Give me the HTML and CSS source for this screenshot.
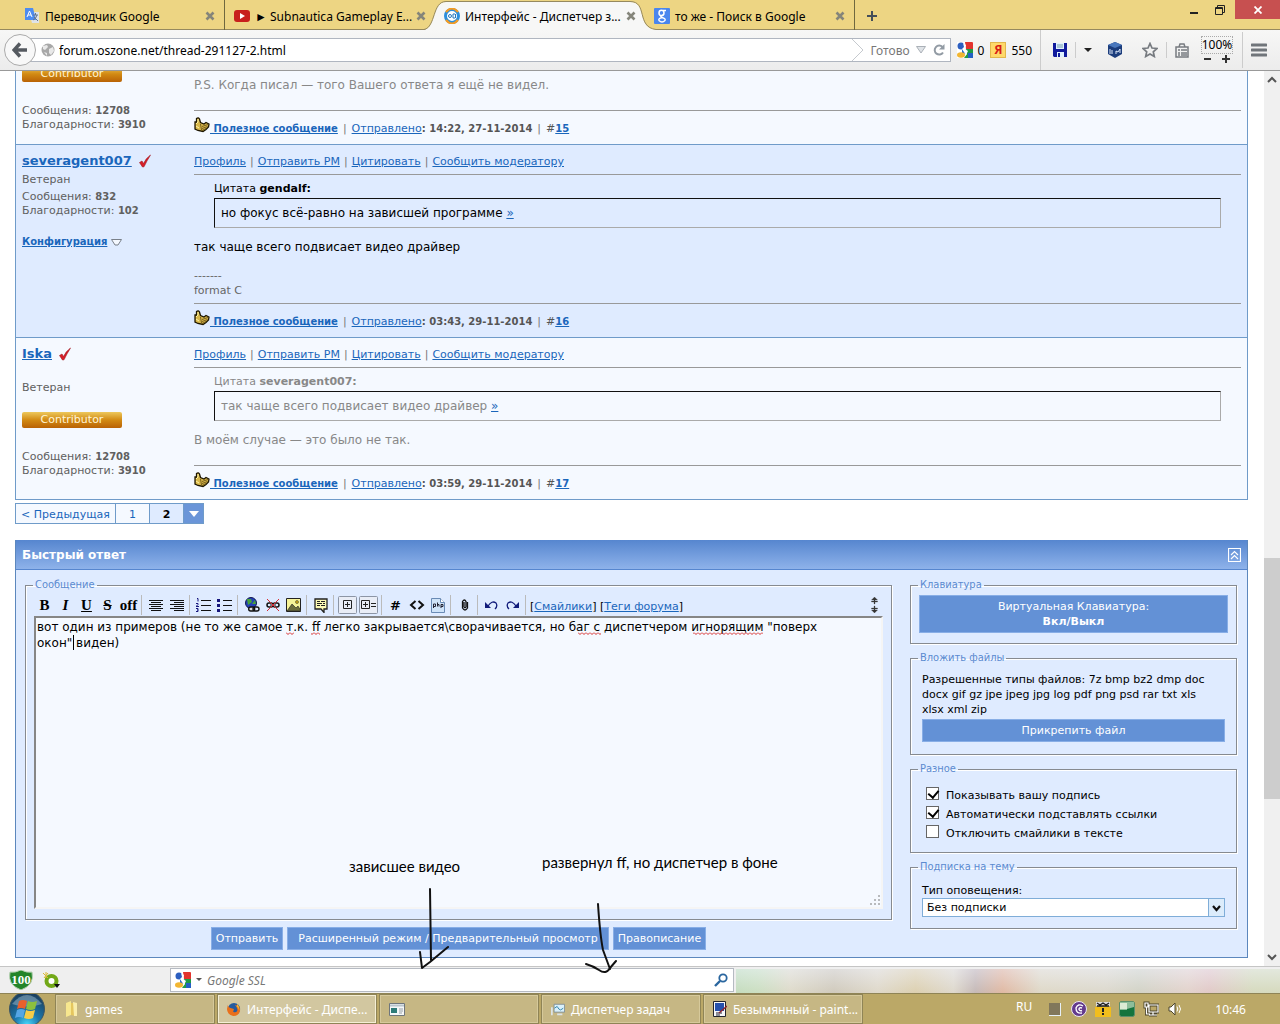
FILE: index.html
```
<!DOCTYPE html>
<html lang="ru">
<head>
    <meta charset="UTF-8">
    <title>Интерфейс - Диспетчер задач</title>
    <meta name="viewport" content="width=device-width, initial-scale=1">
    <link rel="stylesheet" href="styles.css">
</head>
<body>
    <!-- shared icons -->
    <svg class="defs" aria-hidden="true">
        <symbol id="close" viewBox="0 0 10 10"><path d="M1.5 1.5l7 7M8.500 1.500l-7 7" stroke="#85857a" stroke-width="2.600"/></symbol>
        <symbol id="check" viewBox="0 0 14 14"><path d="M1.500 8.500L4 7l1.500 2.500Q8 4 12.500 1Q9 6.500 6 12.800L4.500 13Z" fill="#d81e28" stroke="#a01820" stroke-width=".6"/></symbol>
        <symbol id="thumb" viewBox="0 0 16 16">
            <path d="M1 5L2.500 5V1.500Q4.500 0 5.500 2L6.500 5.500L10 7L12 5.500L15 7L14.500 10L12 12.500L9 14.500L4 13.500L1 12Z" fill="#d9b84a" stroke="#1c1500" stroke-width="1.300"/>
            <path d="M2 7L4 5V2M2 9l3 2" stroke="#fff3a5" fill="none"/>
            <path d="M8 9.500l6-2M8 11.500l5.500-2M8 13.500l4-2M6.500 7l1 6" stroke="#5e4710" stroke-width=".8" fill="none"/>
        </symbol>
        <symbol id="google" viewBox="0 0 16 16">
            <path d="M0 0h16v16H0z" fill="#fff"/>
            <path d="M8 0h7a1 1 0 0 1 1 1v6H9z" fill="#e2332d"/>
            <path d="M9 7h7v9H7l3-4z" fill="#1f9b45"/>
            <path d="M11 11h5v5h-5z" fill="#2561c4"/>
            <circle cx="4" cy="4" r="3.500" fill="#2c5fc0"/>
            <path d="M5 7l5 1-1 4-4-1z" fill="#2f6fc9"/>
            <ellipse cx="4" cy="13" rx="4" ry="2.700" fill="#f2b632"/>
            <path d="M6 1l3 2-1 4 3 2-2 4-2-3-2-3 2-2z" fill="#fff"/>
        </symbol>
    </svg>

    <header class="tabs">
        <div class="tab">
            <svg width="16" height="16" viewBox="0 0 16 16"><path d="M5 4h10v11H8z" fill="#dfe3e8"/><path d="M1 0h8l3 12H1z" fill="#4e8cf0"/><path d="M3 9l2.500-6L8 9M4 7h3" stroke="#fff" fill="none"/><path d="M9 7h5M11.500 5v2M13 7q-1 4-4 5M10 9l4 4" stroke="#66768c" fill="none"/></svg>
            <span>Переводчик Google</span>
            <button aria-label="Закрыть"><svg width="10" height="10"><use href="#close"/></svg></button>
        </div>
        <div class="tab">
            <svg width="16" height="16" viewBox="0 0 16 16"><rect y="2" width="16" height="12" rx="3" fill="#c8201c"/><path d="M6 5l5 3-5 3z" fill="#fff"/></svg>
            <span>► Subnautica Gameplay E...</span>
            <button aria-label="Закрыть"><svg width="10" height="10"><use href="#close"/></svg></button>
        </div>
        <div class="tab active">
            <svg class="tab-shape" width="232" height="30" viewBox="0 0 232 30"><path d="M0 30C12 28 8 2 22 2H206C224 2 212 28 232 29.500V30Z" fill="#f7f7f6"/><path d="M0 29.500C12 27 8 1.500 22 1.500H206C224 1.500 212 27 232 29.500" fill="none" stroke="#96895e"/></svg>
            <svg width="16" height="16" viewBox="0 0 16 16"><circle cx="8" cy="8" r="6.500" fill="#fff" stroke="#2d8fdc" stroke-width="3"/><path d="M2 4Q8-3 14 4M2 12Q8 19 14 12" fill="none" stroke="#f49b22" stroke-width="2"/><circle cx="6" cy="8" r="1.500" fill="none" stroke="#2779bd"/><path d="M9 6v4h2l1-1-1-1 1-1-1-1z" fill="none" stroke="#2779bd"/></svg>
            <span>Интерфейс - Диспетчер з...</span>
            <button aria-label="Закрыть"><svg width="10" height="10"><use href="#close"/></svg></button>
        </div>
        <div class="tab">
            <svg width="16" height="16" viewBox="0 0 16 16"><rect width="16" height="16" rx="1" fill="#4a86ee"/><ellipse cx="7.500" cy="5" rx="2.500" ry="2.700" fill="none" stroke="#fff" stroke-width="1.500"/><path d="M9 2.500h3M9 7q-4 1-1 2.500q4 1 3 3q-3 3-6 0q-1-2 3-3" fill="none" stroke="#fff" stroke-width="1.400"/></svg>
            <span>то же - Поиск в Google</span>
            <button aria-label="Закрыть"><svg width="10" height="10"><use href="#close"/></svg></button>
        </div>
        <button class="new-tab" aria-label="Новая вкладка"><svg width="10" height="10"><path d="M5 0v10M0 5h10" stroke="#454f59" stroke-width="2"/></svg></button>
        <div class="win-buttons">
            <button aria-label="Свернуть"><svg width="10" height="10"><path d="M1 8h8" stroke="#222" stroke-width="2"/></svg></button>
            <button aria-label="Восстановить"><svg width="10" height="10"><path d="M.5 2.500h7v7h-7zM2.500 2V.5h7v7H8M1 3.500h6" fill="none" stroke="#222"/></svg></button>
            <button class="win-close" aria-label="Закрыть окно"><svg width="8" height="8"><path d="M.5 .5l7 7M7.500 .5l-7 7" stroke="#fff" stroke-width="1.800"/></svg></button>
        </div>
    </header>

    <nav class="navbar">
        <button class="back" aria-label="Назад"><svg width="16" height="16"><path d="M8 1.500L2 8l6 6.500M2 8h13" fill="none" stroke="#555a60" stroke-width="3.400"/></svg></button>
        <div class="urlbar">
            <svg width="14" height="14" viewBox="0 0 14 14"><circle cx="7" cy="7" r="6.500" fill="#a8a8a8"/><path d="M2 3l4-1 1 2-3 3-2-1zM8 6l4-2 1 4-3 4-2-2zM3 9l3 1v3z" fill="#e9e9e9"/></svg>
            <input type="text" aria-label="Адрес" value="forum.oszone.net/thread-291127-2.html">
            <svg width="12" height="22"><path d="M0 0l11 11L0 22" fill="none" stroke="#c5c9ce"/></svg>
            <span class="state">Готово</span>
            <svg width="10" height="8"><path d="M.5 .5h9L5 7z" fill="#dfe3e7" stroke="#aab0b7"/></svg>
            <svg class="reload" width="12" height="12"><path d="M10 8.500A4.500 4.500 0 1 1 9.500 3" fill="none" stroke="#929ba4" stroke-width="2"/><path d="M11.500 0v5.500H6z" fill="#929ba4"/></svg>
        </div>
        <div class="counter"><svg width="16" height="16"><use href="#google"/></svg>0</div>
        <div class="counter"><span class="yandex">Я</span>550</div>
        <div class="nav-icons">
            <svg width="14" height="14"><path d="M0 0h14v14H1L0 13z" fill="#101a9c"/><path d="M3 0h8v6H3zM4 9h7v5H4z" fill="#dff2ff"/><path d="M4 2h6M4 4h6" stroke="#79a"/><path d="M5 10h2v4H5z" fill="#101a9c"/></svg>
            <i class="divider"></i>
            <svg width="8" height="4"><path d="M0 0h8L4 4z" fill="#222"/></svg>
            <svg class="cube" width="16" height="16"><path d="M8 0l7 3v9l-7 4-7-4V3z" fill="#1c3d7c"/><path d="M8 0l7 3-7 3-7-3z" fill="#4a78bd"/><path d="M3 7v5M5 8v4M9 12V9l2 1 2-3v4" stroke="#dde9fa" fill="none"/></svg>
            <svg class="star" width="16" height="16"><path d="M8 1.500l2 4.500 5 .5-3.700 3.300 1 4.700L8 12l-4.300 2.500 1-4.700L1 6.500 6 6z" fill="none" stroke="#777b80" stroke-width="1.700"/></svg>
            <i class="divider"></i>
            <svg width="14" height="15"><path d="M1 4h12v10H1zM4 4l1-3h4l1 3M3 7h2M6 7h6M3 10h2M6 10h6M3 12h2M6 12h6" fill="none" stroke="#777b80" stroke-width="1.500"/></svg>
            <div class="zoom"><span>100%</span><svg width="28" height="10"><path d="M1 5h7M19 5h8M23 1v8" stroke="#333" stroke-width="2"/></svg></div>
            <i class="divider tall"></i>
            <svg width="16" height="14"><path d="M1 2h14M1 7h14M1 12h14" stroke="#70757a" stroke-width="3" stroke-linecap="round"/></svg>
        </div>
    </nav>

    <div class="viewport">
        <main class="page">
            <article class="post pale">
                <div class="author bottom">
                    <div class="badge">Contributor</div>
                    <div class="stats">Сообщения: <b>12708</b><br>Благодарности: <b>3910</b></div>
                </div>
                <div class="message bottom">
                    <p class="text grey">P.S. Когда писал — того Вашего ответа я ещё не видел.</p>
                    <div class="foot"><svg width="16" height="16"><use href="#thumb"/></svg><a href="#" class="useful">&nbsp;Полезное сообщение</a><i>|</i><a href="#">Отправлено</a><b>: 14:22, 27-11-2014</b><i>|</i><span>#<a href="#"><b>15</b></a></span></div>
                </div>
            </article>

            <article class="post">
                <div class="author">
                    <div class="name"><a href="#">severagent007</a><svg width="14" height="14"><use href="#check"/></svg></div>
                    <div class="rank">Ветеран</div>
                    <div class="stats">Сообщения: <b>832</b><br>Благодарности: <b>102</b></div>
                    <div class="config"><a href="#">Конфигурация</a><svg width="11" height="8"><path d="M.5 1.500h10L7 7H4z" fill="#f4f8ff" stroke="#79808a"/></svg></div>
                </div>
                <div class="message">
                    <div class="links"><a href="#">Профиль</a><i>|</i><a href="#">Отправить PM</a><i>|</i><a href="#">Цитировать</a><i>|</i><a href="#">Сообщить модератору</a></div>
                    <div class="cite">Цитата <b>gendalf:</b></div>
                    <blockquote>но фокус всё-равно на зависшей программе <a href="#">»</a></blockquote>
                    <p class="text">так чаще всего подвисает видео драйвер</p>
                    <div class="sig">-------<br>format C</div>
                    <div class="foot"><svg width="16" height="16"><use href="#thumb"/></svg><a href="#" class="useful">&nbsp;Полезное сообщение</a><i>|</i><a href="#">Отправлено</a><b>: 03:43, 29-11-2014</b><i>|</i><span>#<a href="#"><b>16</b></a></span></div>
                </div>
            </article>

            <article class="post pale">
                <div class="author spaced">
                    <div class="name"><a href="#">Iska</a><svg width="14" height="14"><use href="#check"/></svg></div>
                    <div class="rank">Ветеран</div>
                    <div class="badge">Contributor</div>
                    <div class="stats">Сообщения: <b>12708</b><br>Благодарности: <b>3910</b></div>
                </div>
                <div class="message">
                    <div class="links"><a href="#">Профиль</a><i>|</i><a href="#">Отправить PM</a><i>|</i><a href="#">Цитировать</a><i>|</i><a href="#">Сообщить модератору</a></div>
                    <div class="cite grey">Цитата <b>severagent007:</b></div>
                    <blockquote class="grey">так чаще всего подвисает видео драйвер <a href="#">»</a></blockquote>
                    <p class="text grey">В моём случае — это было не так.</p>
                    <div class="foot"><svg width="16" height="16"><use href="#thumb"/></svg><a href="#" class="useful">&nbsp;Полезное сообщение</a><i>|</i><a href="#">Отправлено</a><b>: 03:59, 29-11-2014</b><i>|</i><span>#<a href="#"><b>17</b></a></span></div>
                </div>
            </article>

            <div class="pager">
                <a href="#" class="prev">&lt; Предыдущая</a><a href="#">1</a><b>2</b><button aria-label="Перейти"><svg width="10" height="6"><path d="M0 0h10L5 6z" fill="#fff"/></svg></button>
            </div>

            <form class="reply">
                <div class="reply-head">Быстрый ответ
                    <button type="button" aria-label="Свернуть панель"><svg width="13" height="14"><path d="M.5 .5h12v13H.5zM3 7l3.500-3.500L10 7M3 11l3.500-3.500L10 11" fill="none" stroke="#fff" stroke-width="1.200"/></svg></button>
                </div>
                <div class="reply-body">
                    <div class="editor-col">
                        <fieldset class="editor">
                            <legend>Сообщение</legend>
                            <div class="toolbar">
                                <button type="button">B</button>
                                <button type="button" class="it">I</button>
                                <button type="button" class="un">U</button>
                                <button type="button" class="st">S</button>
                                <button type="button" class="off">off</button>
                                <i></i>
                                <button type="button" aria-label="По центру"><svg width="14" height="12"><path d="M0 1.500h14M2 3.500h10M0 5.500h14M2 7.500h10M0 9.500h14M2 11.500h10" stroke="#111"/></svg></button>
                                <button type="button" aria-label="Вправо"><svg width="14" height="12"><path d="M0 1.500h14M4 3.500h10M0 5.500h14M4 7.500h10M0 9.500h14M4 11.500h10" stroke="#111"/></svg></button>
                                <i></i>
                                <button type="button" aria-label="Нумерованный список"><svg width="15" height="14"><path d="M5 2.500h10M5 7.500h10M5 12.500h10" stroke="#111"/><path d="M1 .5h1v3M0 5.500h2v1L0 8.500h3M0 10.500h2v1.500h-1M2 12V13.500H0" fill="none" stroke="#15157c"/></svg></button>
                                <button type="button" aria-label="Список"><svg width="15" height="14"><path d="M6 2.500h9M6 7.500h9M6 12.500h9" stroke="#111"/><path d="M0 1h3v3H0zM0 6h3v3H0zM0 11h3v3H0z" fill="#15157c"/></svg></button>
                                <i></i>
                                <button type="button" aria-label="Ссылка"><svg width="16" height="16"><circle cx="7" cy="6" r="5.500" fill="#2440b8" stroke="#111a50"/><path d="M3 2l4 0 1 3-4 3zM8 7l3-4 1 4z" fill="#47a33b"/><rect x="4.700" y="10" width="6" height="4" rx="2" fill="#ddd" stroke="#111" stroke-width="1.400"/><rect x="9" y="10" width="6" height="4" rx="2" fill="none" stroke="#111" stroke-width="1.400"/></svg></button>
                                <button type="button" aria-label="Убрать ссылку"><svg width="14" height="14"><rect x="1" y="5" width="6" height="4" rx="2" fill="none" stroke="#111" stroke-width="1.500"/><rect x="7" y="5" width="6" height="4" rx="2" fill="none" stroke="#111" stroke-width="1.500"/><path d="M4 7h6" stroke="#111"/><path d="M1 1l12 12M13 1L1 13" stroke="#d82b35"/></svg></button>
                                <button type="button" aria-label="Картинка"><svg width="15" height="14"><path d="M.5 .5h14v13H.5z" fill="#f6f398" stroke="#222"/><path d="M1 13l5-7 4 4 2-2 3 5z" fill="#6b6b3b" stroke="#222" stroke-width=".6"/><circle cx="11" cy="4" r="1.500" fill="#d3ac16" stroke="#222" stroke-width=".5"/></svg></button>
                                <i></i>
                                <button type="button" aria-label="Цитата"><svg width="14" height="15"><path d="M1 1h12v10H10v3.500L7 11H1z" fill="#fdfbb5" stroke="#222" stroke-width="1.300"/><path d="M3 3.500h3M7 3.500h4M3 5.500h5M9 5.500h2M3 7.500h3M7 7.500h4" stroke="#222"/></svg></button>
                                <i></i>
                                <button type="button" aria-label="Спойлер"><svg width="20" height="20"><rect x=".5" y="1.500" width="18" height="17" rx="1" fill="#e9edf6" stroke="#8c95a5"/><path d="M5.500 5.500h8v8h-8zM7 9.500h5M9.500 7v5" fill="none" stroke="#222"/></svg></button>
                                <button type="button" aria-label="Спойлер с заголовком"><svg width="20" height="20"><rect x=".5" y="1.500" width="18" height="17" rx="1" fill="#e9edf6" stroke="#8c95a5"/><path d="M2.500 5.500h8v8h-8zM4 9.500h5M6.500 7v5M12 8.500h5M12 11.500h5" fill="none" stroke="#222"/></svg></button>
                                <i></i>
                                <button type="button" class="hash">#</button>
                                <button type="button" aria-label="HTML"><svg width="16" height="10"><path d="M6.500 1L2 5l4.500 4M9.500 1L14 5 9.500 9" fill="none" stroke="#111" stroke-width="2"/></svg></button>
                                <button type="button" aria-label="PHP"><svg width="14" height="15"><path d="M.5 .5h9l4 4v10H.5z" fill="#cfe3f8" stroke="#6a8bb5"/><path d="M9.500 .5v4h4" fill="#fff" stroke="#6a8bb5"/><path d="M2.500 10V6h2v2.500h-2M6.500 4.500v4M6.500 6.500h1.500v2M10 10V6.500h2v2h-2" fill="none" stroke="#223"/></svg></button>
                                <i></i>
                                <button type="button" aria-label="Вложение"><svg width="8" height="12"><path d="M3 3v5q1 1.500 2 0V2.500Q3.500-.5 1.500 2.500V9q2.500 4 5 0V3" fill="none" stroke="#111" stroke-width="1.300"/></svg></button>
                                <i></i>
                                <button type="button" aria-label="Отменить"><svg width="13" height="9"><path d="M3 5q4-6 8-3 2 3-1 6" fill="none" stroke="#111b7b" stroke-width="1.300"/><path d="M0 1v6h6z" fill="#111b7b"/></svg></button>
                                <button type="button" aria-label="Повторить"><svg width="13" height="9"><path d="M10 5Q6-1 2 2q-2 3 1 6" fill="none" stroke="#111b7b" stroke-width="1.300"/><path d="M13 1v6H7z" fill="#111b7b"/></svg></button>
                                <i></i>
                                <span class="tool-links">[<a href="#">Смайлики</a>] [<a href="#">Теги форума</a>]</span>
                                <svg class="resize" width="7" height="16"><path d="M3.500 0L6.500 3H4v1h2.500v1H4v2H3V5H.5V4H3V3H.5zM3.500 16L6.500 13H4v-1h2.500v-1H4V9H3v2H.5v1H3v1H.5z" fill="#333" stroke="#444" stroke-width=".3"/></svg>
                            </div>
                            <div class="textarea-wrap">
                                <textarea aria-label="Сообщение" spellcheck="false">вот один из примеров (не то же самое т.к. ff легко закрывается\сворачивается, но баг с диспетчером игнорящим "поверх окон" виден)</textarea>
                                <svg class="spell" width="848" height="60">
                                    <defs><pattern id="wave" width="4" height="3" patternUnits="userSpaceOnUse" y="16"><path d="M0 .5l2 2 2-2" fill="none" stroke="#d62a2a"/></pattern></defs>
                                    <path d="M252 16h8v3h-8zM277 16h9v3h-9zM544 16h23v3h-23zM659 16h70v3h-70z" fill="url(#wave)"/>
                                    <path d="M39.500 19v15" stroke="#000"/>
                                </svg>
                                <svg class="grip" width="12" height="12"><path d="M9 1h2M5 5h2M9 5h2M1 9h2M5 9h2M9 9h2" stroke="#b8babd" stroke-width="2"/></svg>
                            </div>
                        </fieldset>
                        <div class="actions">
                            <button type="button">Отправить</button>
                            <button type="button" class="wide">Расширенный режим / Предварительный просмотр</button>
                            <button type="button">Правописание</button>
                        </div>
                    </div>

                    <div class="side-col">
                        <fieldset class="keyboard">
                            <legend>Клавиатура</legend>
                            <button type="button">Виртуальная Клавиатура:<br><b>Вкл/Выкл</b></button>
                        </fieldset>
                        <fieldset class="attach">
                            <legend>Вложить файлы</legend>
                            <p>Разрешенные типы файлов: 7z bmp bz2 dmp doc docx gif gz jpe jpeg jpg log pdf png psd rar txt xls xlsx xml zip</p>
                            <button type="button">Прикрепить файл</button>
                        </fieldset>
                        <fieldset class="misc">
                            <legend>Разное</legend>
                            <label><input type="checkbox" checked>Показывать вашу подпись</label>
                            <label><input type="checkbox" checked>Автоматически подставлять ссылки</label>
                            <label><input type="checkbox">Отключить смайлики в тексте</label>
                        </fieldset>
                        <fieldset class="subscribe">
                            <legend>Подписка на тему</legend>
                            <label for="notify">Тип оповещения:</label>
                            <div class="select">
                                <select id="notify"><option>Без подписки</option></select>
                                <svg width="16" height="17"><path d="M0 0h16v17H0z" fill="#dcecfb"/><path d="M.5 0v17" stroke="#7fadd8"/><path d="M5 7l3.500 4L12 7" fill="none" stroke="#111" stroke-width="2.200"/></svg>
                            </div>
                        </fieldset>
                    </div>
                </div>
            </form>
        </main>
        <div class="scrollbar">
            <svg width="16" height="17"><path d="M4 11l4-4 4 4" fill="none" stroke="#555" stroke-width="2"/></svg>
            <div class="track"><div class="thumb"></div></div>
            <svg width="16" height="17"><path d="M4 6l4 4 4-4" fill="none" stroke="#555" stroke-width="2"/></svg>
        </div>
    </div>

    <div class="addonbar">
        <svg width="26" height="20" viewBox="0 0 26 20"><path d="M2 2q5 1 11-2q6 3 11 2q3 13-11 18Q-1 15 2 2z" fill="#238529" stroke="#b9d3b5"/></svg>
        <span class="shield">100</span>
        <svg width="17" height="17"><circle cx="8.500" cy="9" r="5" fill="#fff" stroke="#72a818" stroke-width="4"/><path d="M0 1l5 5M5 1L1 6M3 0v6" stroke="#d8b832"/><path d="M11 12h6l-3 4z" fill="#111"/></svg>
        <div class="search">
            <svg width="16" height="16"><use href="#google"/></svg>
            <svg width="6" height="4"><path d="M0 0h6L3 3z" fill="#555"/></svg>
            <input type="text" aria-label="Поиск" placeholder="Google SSL">
            <svg width="14" height="14"><circle cx="9" cy="5" r="3.700" fill="none" stroke="#2a669f" stroke-width="1.800"/><path d="M6 8l-5 5" stroke="#2a669f" stroke-width="2.400"/></svg>
        </div>
        <div class="smear"></div>
    </div>

    <footer class="taskbar">
        <button class="start" aria-label="Пуск"><svg width="36" height="31" viewBox="0 0 36 31">
            <defs><radialGradient id="orb" cx=".5" cy=".95" r=".9"><stop offset="0" stop-color="#48d8fb"/><stop offset=".4" stop-color="#1c78ad"/><stop offset="1" stop-color="#1b3e5c"/></radialGradient></defs>
            <circle cx="18" cy="15" r="17.500" fill="url(#orb)" stroke="#3e5560"/><path d="M3 10Q18-8 33 10Q18 15 3 10z" fill="#9fbccb" opacity=".5"/>
            <path d="M10 7q4-2 8 0l-2 8q-4-2-8 0z" fill="#e9602c"/><path d="M19 7q4 2 9 0l-2 8q-4 2-9 0z" fill="#8cc03e"/><path d="M8 16q4-2 8 0l-2 8q-4-2-8 0z" fill="#56a6e5"/><path d="M17 16q4 2 9 0l-2 8q-4 2-9 0z" fill="#f6cc48"/></svg></button>
        <button class="task"><svg width="14" height="16"><path d="M1 2l5-2v14l-5 2z" fill="#f7e78e"/><path d="M6 2h5v13l-5-1z" fill="#e5c65e"/><path d="M8 1l4 1v13H9z" fill="#f9edab"/></svg><span>games</span></button>
        <button class="task current"><svg width="14" height="16" viewBox="0 0 16 16"><circle cx="8" cy="8" r="7" fill="#245b9f"/><path d="M1 3q0 3 4 4l3 1-1 3q4 2 5-2 0-3-3-6 6 1 6 6-1 7-8 7-7-2-7-8z" fill="#e9701c"/><path d="M12 2q3 4 2 8-1-4-3-5z" fill="#f7b52c"/></svg><span>Интерфейс - Диспе...</span></button>
        <button class="task" aria-label="Окно"><svg width="16" height="13"><path d="M.5 .5h15v12H.5z" fill="#f5f7f8" stroke="#6f767b"/><path d="M1 2.500h14" stroke="#b9c4cc" stroke-width="2"/><path d="M2 5h6v5H2z" fill="#2d7b78"/><path d="M10 6h4M10 8h4M10 10h3" stroke="#98a1a8"/></svg></button>
        <button class="task"><svg width="14" height="15" viewBox="0 0 16 15"><path d="M3.500 1.500h12v9h-12z" fill="#d9f0fa" stroke="#7d8b94"/><path d="M4 6l3-2 2 3 2 1 3-2" fill="none" stroke="#257ba5"/><path d="M1 5v9M7 13h6" stroke="#dce3e6" stroke-width="2"/></svg><span>Диспетчер задач</span></button>
        <button class="task"><svg width="14" height="16"><path d="M.5 .5h12v15H.5z" fill="#f5f6fa" stroke="#22242b"/><path d="M2 2h9v8H2z" fill="#2550ac"/><path d="M3 12h6M3 14h4" stroke="#223"/><path d="M14 5l-8 7" stroke="#8b2630" stroke-width="1.500"/></svg><span>Безымянный - paint...</span></button>
        <div class="tray">
            <span class="lang">RU</span>
            <svg width="16" height="16"><path d="M2 2h11v12H2z" fill="#81775b"/><path d="M13.500 2v12M2 14.500h12" stroke="#e6f0f7"/></svg>
            <svg width="16" height="16"><circle cx="8" cy="8" r="7.500" fill="#633a8d" stroke="#ece7f2"/><path d="M12 5Q7 2 5 7q0 6 6 5M11 7Q8 6 8 8.500q1 2 3 1" fill="none" stroke="#fff" stroke-width="1.400"/></svg>
            <svg width="16" height="16"><path d="M0 6h16v10H0z" fill="#f2be1c"/><path d="M1 1h14v4H1z" fill="#ddd"/><path d="M2 2l3 2 3-2 3 2 3-2M2 5h12" stroke="#222" fill="none" stroke-width="1.400"/><path d="M8 7v4M8 12v2" stroke="#222" stroke-width="2"/></svg>
            <svg width="16" height="16"><rect x=".5" y=".5" width="15" height="15" rx="2" fill="#14743d" stroke="#5b8f6d"/><path d="M1 1h14v5L8 8v1H1z" fill="#8dbd9a"/><path d="M1 2h7v6H1z" fill="#dcebd5"/></svg>
            <svg width="16" height="16"><path d="M6 4h9v7H6zM10 11v3M6 14h8M2 2h3v4H2zM3.500 6v7H7" fill="none" stroke="#4d462c" stroke-width="3"/><path d="M6 4h9v7H6zM10 11v3M6 14h8M2 2h3v4H2zM3.500 6v7H7" fill="none" stroke="#fff" stroke-width="1.200"/></svg>
            <svg width="16" height="16"><path d="M2 6h2l4-4v12l-4-4H2z" fill="#fff" stroke="#4d462c"/><path d="M10 5.500q1.500 2.500 0 5M12 4q3 4 0 8" fill="none" stroke="#fff"/></svg>
            <time>10:46</time>
        </div>
    </footer>

    <!-- hand-drawn notes over the desktop -->
    <div class="notes">
        <span class="note video">зависшее видео</span>
        <span class="note manager">развернул ff, но диспетчер в фоне</span>
        <svg width="240" height="100" viewBox="400 880 240 100"><g fill="none" stroke="#111" stroke-width="2" stroke-linecap="round" stroke-linejoin="round"><path d="M430 889L431 960M420 952L422 968L430 962L448 947M598 904Q600 935 603 950L610 969M586 964Q593 966 599 970Q606 975 610 968L616 961"/></g></svg>
    </div>
</body>
</html>
```
FILE: styles.css
```
* { box-sizing: border-box; }
html, body { height: 100%; }
body {
    margin: 0;
    display: flex;
    flex-direction: column;
    overflow: hidden;
    position: relative;
    background: #fff;
    font-family: "DejaVu Sans", Verdana, sans-serif;
    font-size: 11px;
    color: #000;
}
button, input, select, textarea { font: inherit; color: inherit; margin: 0; padding: 0; border: 0; background: none; }
svg { flex: none; display: block; }
i { font-style: normal; }
p, blockquote { margin: 0; }
a { color: #1a66bb; }
.defs { position: absolute; width: 0; height: 0; }

/* browser window */
.tabs, .navbar, .addonbar, .taskbar { flex: none; font-family: "Noto Sans", "Open Sans", sans-serif; font-size: 12px; }
.tabs { display: flex; height: 30px; padding-left: 15px; background: #edd583; border-bottom: 1px solid #96895e; }
.tab { position: relative; display: flex; align-items: center; gap: 5px; width: 210px; height: 30px; padding: 2px 9px 0 9px; border-right: 1px solid #6f683f; white-space: nowrap; }
.tab > svg, .tab > span, .tab > button { position: relative; }
.tab span { flex: 1; min-width: 0; }
.tab.active { border: 0; z-index: 1; }
.tab .tab-shape { position: absolute; left: -11px; top: 0; }
.tab:has(+ .active) { border: 0; }
.new-tab { padding: 2px 12px 0; }
.win-buttons { display: flex; margin-left: auto; }
.win-buttons button { width: 26px; height: 19px; display: flex; justify-content: center; align-items: center; }
.win-buttons .win-close { width: 45px; margin-left: 2px; background: #c75050; }

.navbar { position: relative; display: flex; align-items: center; height: 41px; padding-left: 4px; background: linear-gradient(#f7f7f6, #ececec); border-bottom: 1px solid #999; z-index: 2; }
.back { position: relative; z-index: 1; display: flex; align-items: center; justify-content: center; width: 32px; height: 32px; border: 1px solid #aaa; border-radius: 50%; background: #f8f8f8; }
.urlbar { flex: 1; display: flex; align-items: center; height: 24px; margin-left: -6px; padding: 0 5px 0 10px; background: #fff; border: 1px solid #b0b6c0; }
.urlbar input { flex: 1; min-width: 0; margin-left: 4px; outline: 0; }
.state { margin: 0 6px; color: #777; }
.reload { margin-left: 7px; }
.counter { display: flex; align-items: center; gap: 5px; margin-left: 6px; }
.yandex { width: 16px; height: 16px; border: 1px solid #e2b74c; background: #ffd96a; color: #d81c16; font-weight: bold; line-height: 14px; text-align: center; }
.nav-icons { display: flex; align-items: center; gap: 11px; align-self: stretch; margin-left: 8px; padding: 0 13px 0 12px; border-left: 1px solid #ccc; }
.divider { width: 1px; height: 16px; background: #ccc; margin: 0 -3px; }
.divider.tall { height: 36px; }
.cube { margin-left: 4px; }
.star { margin-left: 8px; }
.zoom { display: flex; flex-direction: column; align-items: center; width: 34px; }
.zoom span { line-height: 16px; border: 1px dotted #aaa; }

/* forum page */
.viewport { flex: 1; min-height: 0; display: flex; overflow: hidden; }
.page { flex: 1; min-width: 0; display: flex; flex-direction: column; justify-content: flex-end; padding: 0 16px 8px 15px; }
.page > * { flex: none; }
.post { display: grid; grid-template-columns: 172px 1fr; padding: 0 6px; background: #dfebff; border: 1px solid #6f9bc9; border-top: 0; }
.post.pale { background: #f5f9ff; }
.author { display: flex; flex-direction: column; padding-top: 8px; line-height: 14px; color: #606060; }
.name { display: flex; align-items: center; gap: 6px; font-size: 13px; font-weight: bold; line-height: 16px; }
.rank { margin-top: 4px; }
.stats { margin-top: 3px; }
.stats b { font-size: 10px; }
.config { display: flex; align-items: center; gap: 4px; margin-top: 17px; font-size: 10px; font-weight: bold; }
.badge { width: 100px; height: 16px; border-radius: 2px; background: linear-gradient(#edc85c, #d28a13 50%, #b96205); color: #fff5d8; line-height: 15px; text-align: center; }
.badge + .stats { margin-top: 22px; }
.spaced .rank { margin-top: 19px; }
.spaced .badge { margin-top: 17px; }
.author.bottom { padding: 0 0 12px; }
.message { display: flex; flex-direction: column; }
.bottom { justify-content: flex-end; }
.links { padding: 9px 0 4px; line-height: 16px; border-bottom: 1px solid #999; }
.links i, .foot i { margin: 0 4px; color: #777; }
.cite { margin: 6px 20px 1px; line-height: 16px; }
blockquote { margin: 0 20px; padding: 5px 6px; font-size: 12px; line-height: 18px; border: 1px solid #aaa; border-top-color: #111; border-left-color: #111; }
.text { margin-top: 11px; font-size: 12px; line-height: 16px; }
.grey { color: #888; }
.text.grey { margin-bottom: 17px; }
.sig { margin: 13px 0 5px; line-height: 15px; color: #666; }
.foot { display: flex; align-items: flex-start; height: 34px; padding-top: 6px; border-top: 1px solid #999; line-height: 24px; color: #555; }
.foot b, .useful { font-size: 10px; font-weight: bold; }
.foot i { margin: 0 5px; }

.pager { display: flex; align-self: flex-start; height: 21px; margin: 3px 0 16px; border: 1px solid #6f9bc9; line-height: 21px; }
.pager > * { width: 34px; text-align: center; background: #f5f9ff; border-right: 1px solid #6f9bc9; text-decoration: none; }
.pager .prev { width: 100px; }
.pager b { background: #dfebff; }
.pager button { display: flex; align-items: center; justify-content: center; width: 19px; border: 0; background: #6a95d8; }

.reply { background: #dfebff; border: 1px solid #5c87bd; border-top: 0; }
.reply-head { display: flex; align-items: center; justify-content: space-between; height: 30px; padding: 0 6px; background: linear-gradient(#5686cf, #8eb2ea); border-bottom: 1px solid #5686cf; color: #fff; font-size: 12px; font-weight: bold; }
.reply-body { display: grid; grid-template-columns: 1fr 327px; gap: 18px; padding: 8px 10px 7px 9px; }
fieldset { min-width: 0; margin: 0; padding: 0 8px; border: 1px solid #868a90; box-shadow: 1px 1px #fff, inset 1px 1px #fff; }
legend { margin-left: -1px; padding: 0 2px; font-family: "DejaVu Sans Condensed", Tahoma, sans-serif; line-height: 14px; color: #5b8ad0; }
.editor { padding-bottom: 10px; }
.toolbar { display: flex; align-items: center; height: 22px; margin-top: 2px; }
.toolbar button { flex: none; display: flex; align-items: center; justify-content: center; width: 21px; height: 20px; font-family: "Liberation Serif", serif; font-size: 15px; font-weight: bold; }
.toolbar i { flex: none; width: 1px; height: 20px; margin: 0 3px 0 2px; background: #bbb; }
.toolbar .it { font-style: italic; }
.toolbar .un { text-decoration: underline; }
.toolbar .st { text-decoration: line-through; }
.toolbar .hash { font-family: "DejaVu Sans", sans-serif; font-size: 13px; }
.tool-links { padding: 2px 0 0 1px; }
.resize { margin-left: auto; margin-right: 5px; }
.textarea-wrap { position: relative; }
textarea { display: block; width: 100%; height: 293px; padding: 1px 40px 1px 1px; font-size: 12px; line-height: 16px; resize: none; outline: 0; background: #f5f9ff; border: 2px solid #868686; border-right-color: #f5f5f5; border-bottom-color: #f5f5f5; }
.spell { position: absolute; left: 0; top: 0; pointer-events: none; }
.grip { position: absolute; right: 2px; bottom: 2px; }
.actions { display: flex; justify-content: center; gap: 4px; margin-top: 7px; }
.actions button, .side-col button { height: 23px; padding: 0 4px; background: #6391d6; border: 1px solid #88aee6; color: #fff; }
.actions .wide { padding: 0 10px; }
.side-col { display: flex; flex-direction: column; gap: 7px; }
.keyboard { padding: 3px 8px 10px; }
.side-col .keyboard button { width: 100%; height: 38px; line-height: 15px; }
.attach { padding: 7px 11px 12px; line-height: 15px; }
.attach p { padding-right: 16px; }
.attach legend, .subscribe legend { margin-left: -4px; }
.side-col .attach button { width: 100%; margin-top: 2px; }
.misc { padding: 10px 15px 9px; }
.misc legend { margin-left: -8px; }
.misc label { display: flex; align-items: center; gap: 7px; height: 19px; }
input[type="checkbox"] { appearance: none; width: 13px; height: 13px; background: #fff; border: 1px solid #666; margin-bottom: 4px; }
input[type="checkbox"]:checked::after { content: ""; display: block; width: 5px; height: 8px; margin: 0 0 0 3px; border: solid #000; border-width: 0 2px 2px 0; transform: rotate(40deg); }
.subscribe { padding: 9px 11px 11px; line-height: 15px; }
.select { position: relative; }
.select select { display: block; appearance: none; width: 100%; height: 19px; padding-left: 4px; background: #fff; border: 1px solid #7fadd8; }
.select svg { position: absolute; right: 1px; top: 1px; pointer-events: none; }
.scrollbar { flex: none; display: flex; flex-direction: column; width: 16px; background: #f0f0f0; }
.track { flex: 1; display: grid; grid-template-rows: 470fr 241fr 150fr; }
.thumb { grid-row: 2; background: #cdcdcd; }

/* add-on bar */
.addonbar { display: flex; align-items: center; height: 27px; padding-left: 8px; background: #efefef; border-top: 1px solid #c5c5c5; }
.shield { width: 26px; margin-left: -26px; margin-right: 9px; z-index: 1; color: #fff; font-family: "Liberation Serif", serif; font-size: 13px; font-weight: bold; text-align: center; }
.search { display: flex; align-items: center; gap: 5px; width: 564px; height: 24px; margin-left: 110px; padding: 0 5px 0 4px; background: #fff; border: 1px solid #b5bac2; }
.search input { flex: 1; outline: 0; }
.search input::placeholder { font-style: italic; color: #777; opacity: 1; }
.smear { flex: 1; align-self: stretch; margin: 2px 0 0 2px; background: linear-gradient(rgba(240, 240, 240, .6), rgba(225, 215, 185, .4)), linear-gradient(90deg, #b2dfc0, #bde3c6 4%, #dcdcd4 10%, #c5c1bd 18%, #ddd9d4 26%, #d9cbaa 33%, #dcd9d8 40%, #b3a5b4 44%, #dfa594 49%, #ddd9d0 56%, #d9d9d8 68%, #c9d0ce 74%, #e3cfd6 83%, #e1c0cf 87%, #cfdcc1 95%); }

/* taskbar */
.taskbar { display: flex; gap: 2px; height: 31px; padding-left: 9px; background: #bba867; border-top: 1px solid #8f8456; color: #fff; }
.start { width: 44px; }
.task { display: flex; align-items: center; gap: 6px; width: 160px; padding-left: 9px; background: #c6b784; border: 1px solid #8f8456; box-shadow: inset 0 0 0 1px #d6c99b; text-align: left; white-space: nowrap; }
.task.current { background: #d2c7a0; box-shadow: inset 0 0 0 1px #f5efd5; }
.tray { display: flex; align-items: center; gap: 8px; margin-left: auto; padding-right: 34px; }
.lang { margin: 0 7px 6px 0; }
.tray time { margin-left: 24px; }

.notes { position: absolute; inset: 0; pointer-events: none; z-index: 5; }
.note { position: absolute; font-family: Lato, Carlito, sans-serif; font-size: 15px; line-height: 18px; white-space: nowrap; }
.note.video { left: 349px; top: 857px; }
.note.manager { left: 542px; top: 853px; }
.notes svg { position: absolute; left: 400px; top: 880px; }
```
